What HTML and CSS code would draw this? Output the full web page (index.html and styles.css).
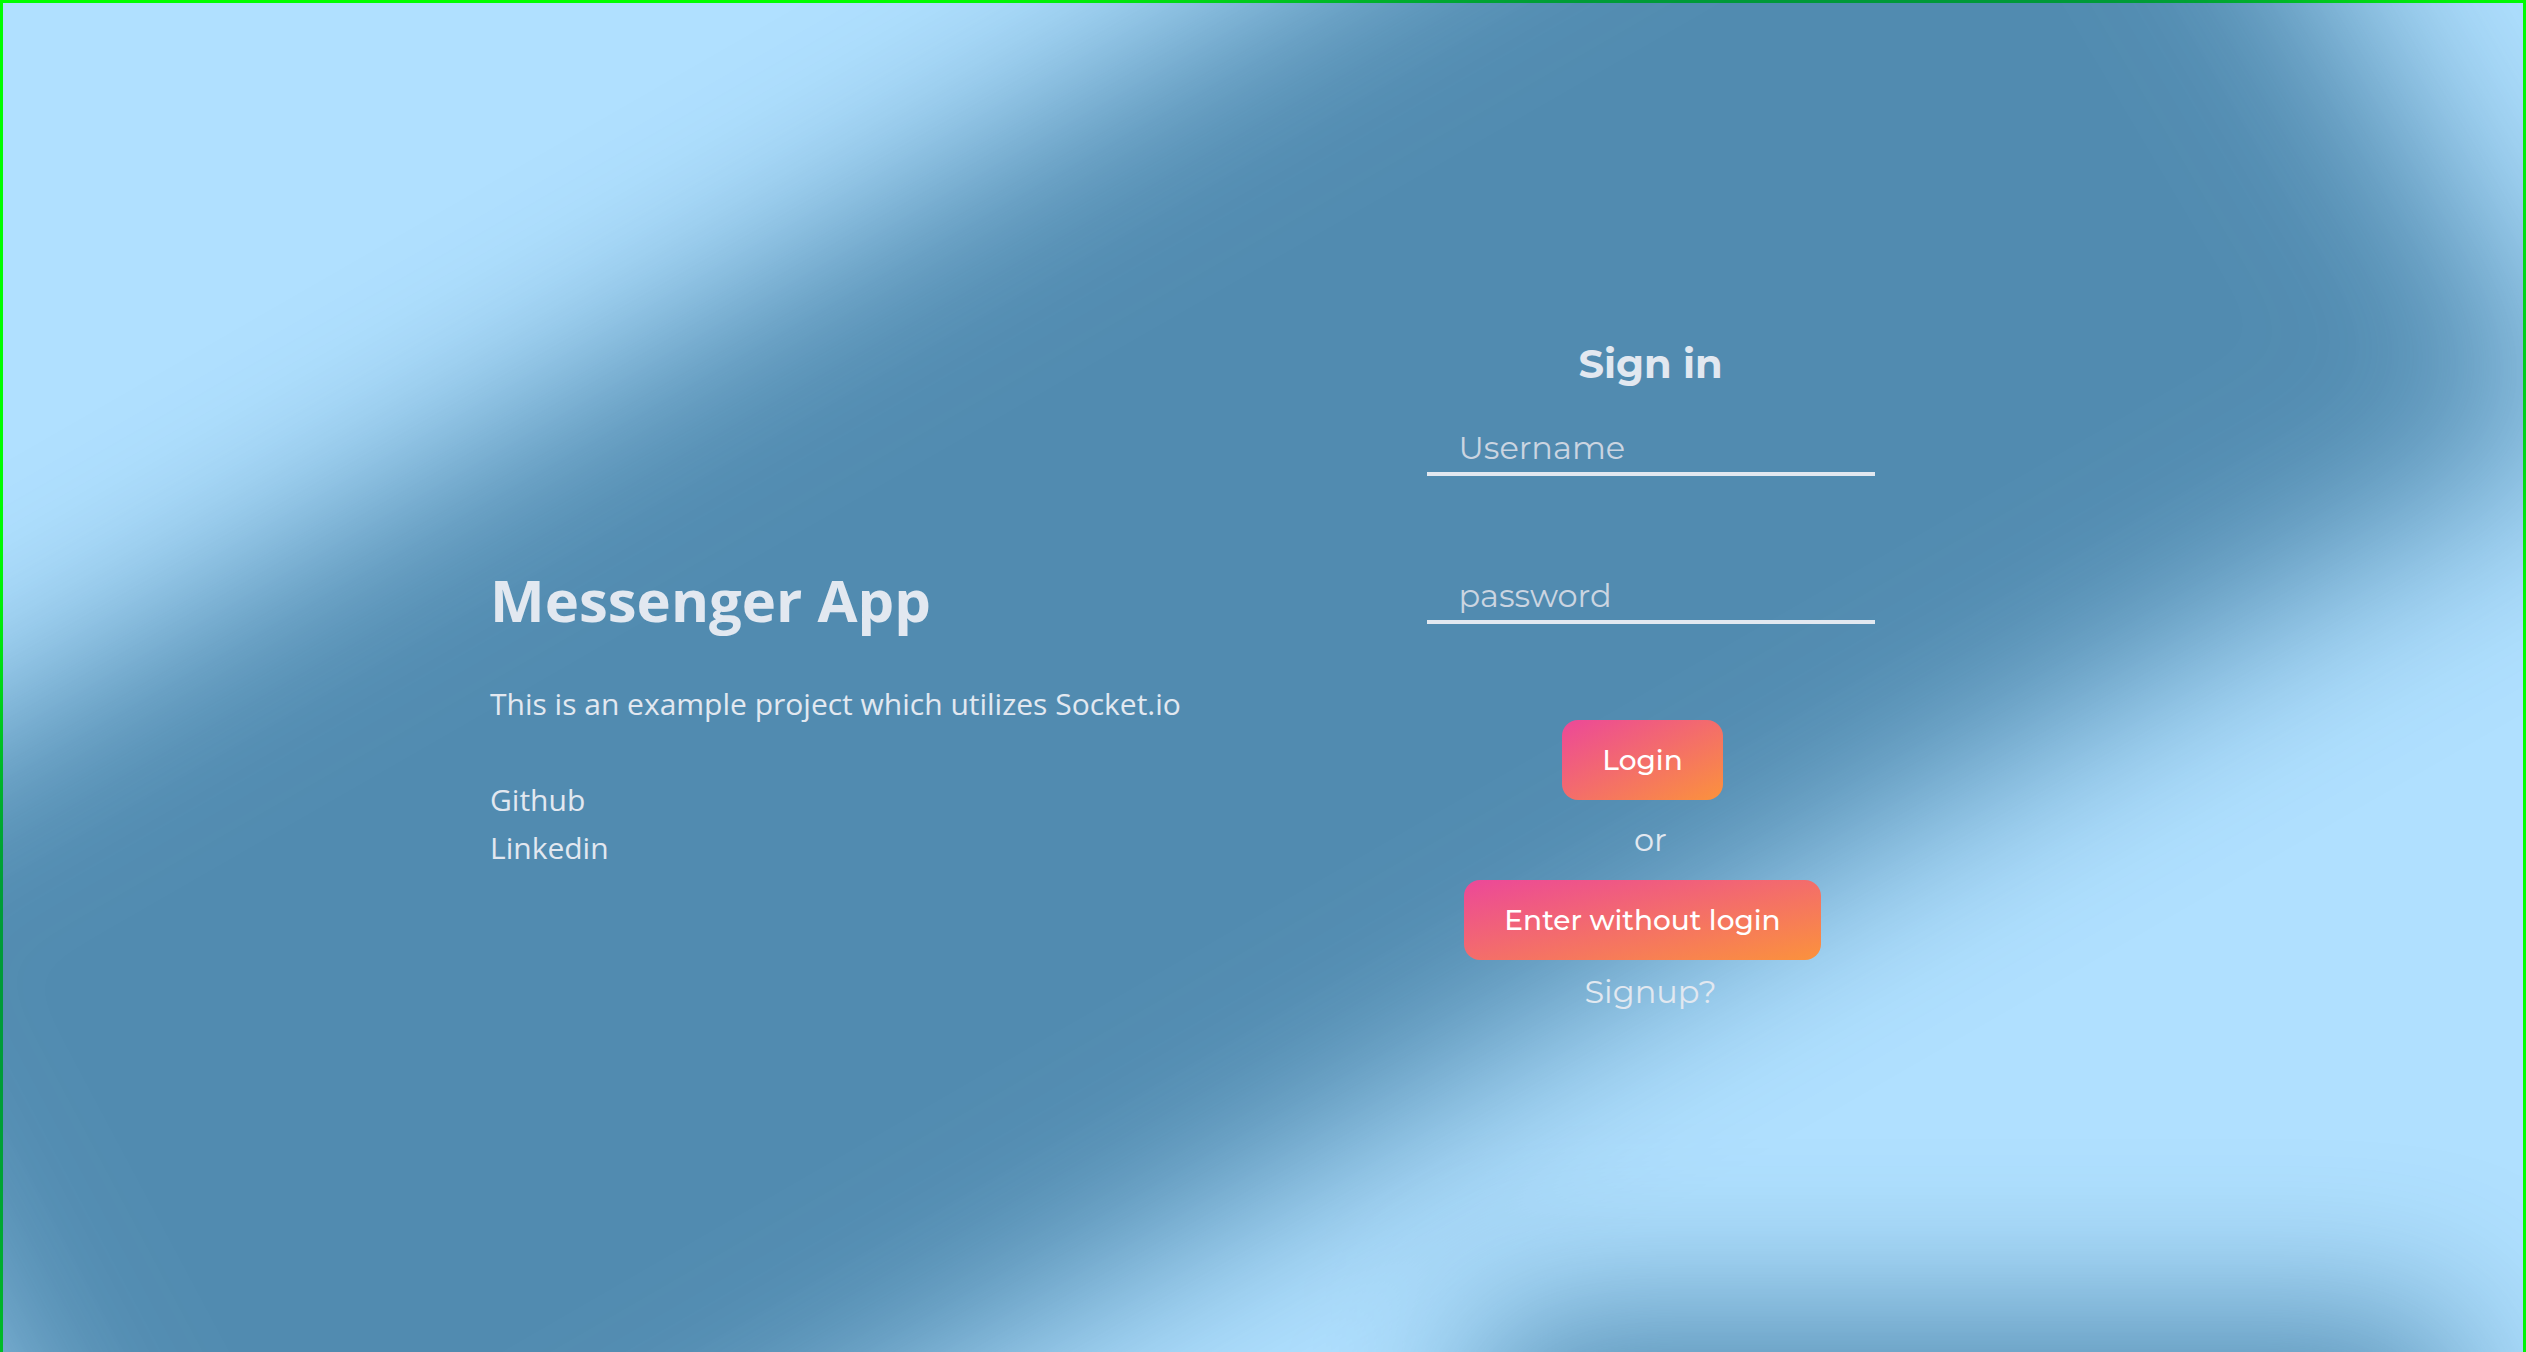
FILE: index.html
```html
<!DOCTYPE html>
<html lang="en">
<head>
<meta charset="utf-8">
<meta name="viewport" content="width=device-width, initial-scale=1">
<title>Messenger App</title>
<link rel="stylesheet" href="styles.css">
</head>
<body>
<div class="page">
  <svg class="backdrop" viewBox="0 0 2526 1352" preserveAspectRatio="none" aria-hidden="true">
    <defs>
      <filter id="soft-band" filterUnits="userSpaceOnUse" x="-700" y="-900" width="3926" height="3152" color-interpolation-filters="sRGB">
        <feGaussianBlur stdDeviation="95"/>
      </filter>
      <filter id="soft-block" filterUnits="userSpaceOnUse" x="1100" y="900" width="1800" height="1200" color-interpolation-filters="sRGB">
        <feGaussianBlur stdDeviation="80"/>
      </filter>
    </defs>
    <g fill="#00426c" opacity="0.534">
      <path filter="url(#soft-band)" d="M-291 882 L2060 -469 L2590 425 L200 1803 Z"/>
      <rect filter="url(#soft-block)" x="1480" y="1315" width="980" height="500" rx="40"/>
    </g>
  </svg>
  <main class="content">
    <section class="intro">
      <h1 class="intro-title">Messenger App</h1>
      <p class="intro-text">This is an example project which utilizes Socket.io</p>
      <nav class="intro-links">
        <a href="#github">Github</a>
        <a href="#linkedin">Linkedin</a>
      </nav>
    </section>
    <form class="login">
      <h2 class="login-title">Sign in</h2>
      <div class="fields">
        <input class="field" type="text" placeholder="Username" aria-label="Username">
        <input class="field" type="password" placeholder="password" aria-label="password">
      </div>
      <button class="button" type="submit">Login</button>
      <p class="or">or</p>
      <button class="button" type="button">Enter without login</button>
      <a class="signup" href="#signup">Signup?</a>
    </form>
  </main>
</div>
</body>
</html>
```
FILE: styles.css
```css
* {
  box-sizing: border-box;
}

body {
  margin: 0;
  background: #b0e0ff;
  color: #e2e8f0;
}

a {
  color: inherit;
  text-decoration: none;
}

.page {
  position: relative;
  min-height: 100vh;
  display: flex;
  align-items: center;
  justify-content: center;
  overflow: clip;
  overflow-clip-margin: border-box;
  border: 3px solid #00ff00;
  border-bottom: 0;
}

/* Spreads over the page border, so the shapes tint it too */
.backdrop {
  position: absolute;
  top: -3px;
  left: -3px;
  width: calc(100% + 6px);
  height: calc(100% + 3px);
}

.content {
  position: relative;
  width: 100%;
  max-width: 1546px;
  display: grid;
  grid-template-columns: 1fr 1fr;
  align-items: center;
  column-gap: 4px;
}

.intro {
  padding-top: 84px;
  font: 30px/48px "Segoe UI", "Open Sans", sans-serif;
}

.intro-title {
  margin: 0 0 48px;
  font-size: 58px;
  line-height: 64px;
  font-weight: 700;
}

.intro-text {
  margin: 0 0 48px;
}

.intro-links {
  display: flex;
  flex-direction: column;
  align-items: flex-start;
}

.login {
  display: flex;
  flex-direction: column;
  align-items: center;
  font: 400 32px/48px Montserrat, Inter, sans-serif;
}

.login-title {
  margin: 0 0 28px;
  font-size: 40px;
  line-height: 48px;
  font-weight: 700;
}

.fields {
  display: flex;
  flex-direction: column;
  gap: 88px;
  margin-bottom: 96px;
}

.field {
  width: 448px;
  height: 60px;
  padding: 8px 32px 0;
  border: 0;
  border-bottom: 4px solid #e2e8f0;
  border-radius: 0;
  background: none;
  color: #e2e8f0;
  font: inherit;
  outline: 0;
}

.field::placeholder {
  color: #cbd5e1;
  opacity: 1;
}

.button {
  height: 80px;
  margin-right: 16px;
  padding: 0 40px;
  border: 0;
  border-radius: 16px;
  background: linear-gradient(to bottom right, #ec4899, #fb923c);
  color: #fff;
  font: inherit;
  font-size: 28px;
  font-weight: 500;
}

.or {
  margin: 16px 0;
}

.signup {
  margin-top: 8px;
}
```
